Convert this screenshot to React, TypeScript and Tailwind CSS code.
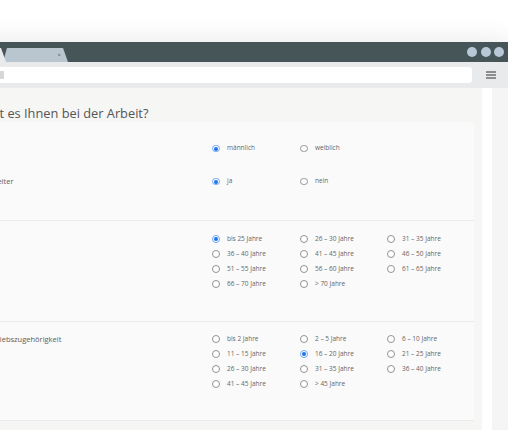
import React from "react";

type Opt = { label: string; checked?: boolean };

function Radio({ label, checked }: Opt) {
  return (
    <div className="flex h-[15px] items-center gap-[7.5px]">
      {checked ? (
        <span className="flex h-[7.5px] w-[7.5px] shrink-0 items-center justify-center rounded-full border border-[#6fa5f5] bg-white">
          <span className="h-[4px] w-[4px] rounded-full bg-[#1a73e8]" />
        </span>
      ) : (
        <span className="h-[7.5px] w-[7.5px] shrink-0 rounded-full border border-[#929292] bg-white" />
      )}
      <span className="whitespace-nowrap text-[6.5px] leading-none text-[#666]">{label}</span>
    </div>
  );
}

function Options({ opts, cols }: { opts: Opt[]; cols: 2 | 3 }) {
  return (
    <div className={cols === 3 ? "grid grid-cols-[88px_87px_87px]" : "grid grid-cols-[88px_87px]"}>
      {opts.map((o) => (
        <Radio key={o.label} {...o} />
      ))}
    </div>
  );
}

const alter: Opt[] = [
  { label: "bis 25 Jahre", checked: true },
  { label: "26 – 30 Jahre" },
  { label: "31 – 35 Jahre" },
  { label: "36 – 40 Jahre" },
  { label: "41 – 45 Jahre" },
  { label: "46 – 50 Jahre" },
  { label: "51 – 55 Jahre" },
  { label: "56 – 60 Jahre" },
  { label: "61 – 65 Jahre" },
  { label: "66 – 70 Jahre" },
  { label: "> 70 Jahre" },
];

const zugehoerigkeit: Opt[] = [
  { label: "bis 2 Jahre" },
  { label: "2 – 5 Jahre" },
  { label: "6 – 10 Jahre" },
  { label: "11 – 15 Jahre" },
  { label: "16 – 20 Jahre", checked: true },
  { label: "21 – 25 Jahre" },
  { label: "26 – 30 Jahre" },
  { label: "31 – 35 Jahre" },
  { label: "36 – 40 Jahre" },
  { label: "41 – 45 Jahre" },
  { label: "> 45 Jahre" },
];

function QLabel({ children }: { children?: React.ReactNode }) {
  return (
    <div className="w-[227px] shrink-0 whitespace-nowrap text-[7.5px] leading-[15px] text-[#5c5c5c]">
      {children}
    </div>
  );
}

export default function App() {
  return (
    <div
      className="h-[430px] w-[508px] overflow-hidden bg-white pt-[42px]"
      style={{ fontFamily: "'Open Sans', sans-serif" }}
    >
      <div className="ml-[-80px] w-[590px] shadow-[0_0_26px_rgba(0,0,0,0.10)]">
        {/* ── Title bar with tabs ─────────────────────────────── */}
        <div className="flex h-[20px] items-end bg-[#465558] pl-[20px] pr-[6px]">
          <div className="relative z-10 h-[14px] w-[66px] bg-[#e9eaec] [clip-path:polygon(0_100%,5px_0,calc(100%-5px)_0,100%_100%)]" />
          <div className="ml-[-3px] flex h-[14px] w-[65px] items-center justify-end bg-[#b9c5cf] pr-[7px] [clip-path:polygon(0_100%,4px_0,calc(100%-5px)_0,100%_100%)]">
            <span className="text-[6px] leading-none text-[#555]">×</span>
          </div>
          <div className="ml-auto flex gap-[3.5px] self-center">
            <span className="h-[10px] w-[10px] rounded-full bg-[#b9c8d6]" />
            <span className="h-[10px] w-[10px] rounded-full bg-[#b9c8d6]" />
            <span className="h-[10px] w-[10px] rounded-full bg-[#b9c8d6]" />
          </div>
        </div>

        {/* ── Address bar ─────────────────────────────────────── */}
        <div className="flex h-[26px] items-center bg-[#e9eaec] pl-[10px]">
          <div className="flex h-[16px] w-[542px] items-center rounded-[3px] bg-white">
            <span className="ml-[66px] h-[8px] w-[8px] rounded-[1px] bg-[#d6d6d6]" />
          </div>
          <div className="flex flex-1 justify-center">
            <div className="flex w-[10px] flex-col gap-[1.5px]">
              <span className="h-[1.5px] bg-[#8d8d8d]" />
              <span className="h-[1.5px] bg-[#8d8d8d]" />
              <span className="h-[1.5px] bg-[#8d8d8d]" />
            </div>
          </div>
        </div>

        {/* ── Page ────────────────────────────────────────────── */}
        <div className="flex h-[342px]">
          <div className="flex-1 bg-[#f6f6f5] pr-[8px] pt-[16px]">
            <h1 className="pl-[32px] text-[12.8px] leading-[18px] text-[#555]">
              Wie geht es Ihnen bei der Arbeit?
            </h1>

            <div className="border-b border-[#ebebeb] bg-[#fafafa] pb-[30.5px] pl-[65px] pt-[19px]">
              <div className="flex">
                <QLabel />
                <Options cols={2} opts={[{ label: "männlich", checked: true }, { label: "weiblich" }]} />
              </div>
              <div className="mt-[18px] flex">
                <QLabel>Arbeiter</QLabel>
                <Options cols={2} opts={[{ label: "ja", checked: true }, { label: "nein" }]} />
              </div>
            </div>

            <div className="flex border-b border-[#ebebeb] bg-[#fafafa] pb-[29.5px] pl-[65px] pt-[11px]">
              <QLabel />
              <Options cols={3} opts={alter} />
            </div>

            <div className="flex border-b border-[#ebebeb] bg-[#fafafa] pb-[28px] pl-[65px] pt-[9.5px]">
              <QLabel>Betriebszugehörigkeit</QLabel>
              <Options cols={3} opts={zugehoerigkeit} />
            </div>
          </div>
          <div className="w-[12px] bg-white" />
          <div className="w-[23px] bg-[#f5f5f5]" />
        </div>
      </div>
    </div>
  );
}
